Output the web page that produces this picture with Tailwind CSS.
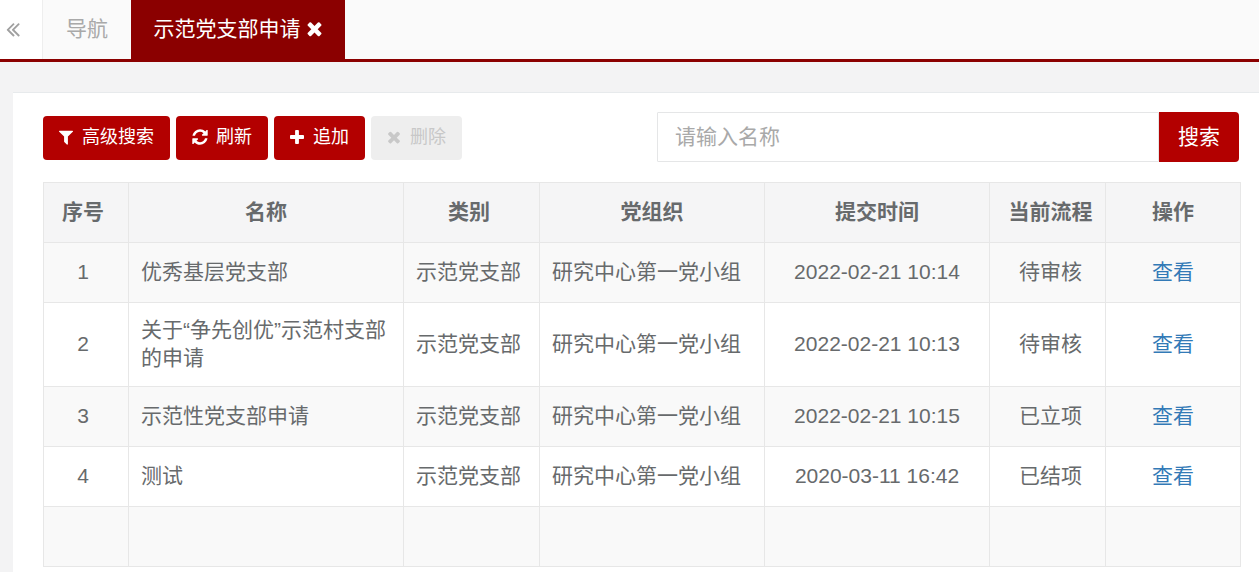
<!DOCTYPE html>
<html lang="en">
  <head>
    <meta charset="UTF-8" />
    <title>示范党支部申请</title>
    <script src="https://cdn.jsdelivr.net/npm/@tailwindcss/browser@4"></script>
  </head>
  <body class="bg-[#f3f3f4] h-[572px] overflow-hidden font-['Liberation_Sans','Noto_Sans_CJK_SC',sans-serif] text-[21px] text-[#676a6c]">
    <!-- Tabs -->
    <nav class="flex h-[62px] bg-[#fafafa] border-b-[3px] border-[#8b0000]">
      <button class="w-[43px] bg-white border-r border-[#eeeeee] flex items-center pl-[6px] pb-[2px]">
        <svg class="w-[14px] h-[24px] fill-[#a0a0a0]" viewBox="0 0 1024 1792"><path d="M627 1376q0 13-10 23l-50 50q-10 10-23 10t-23-10l-466-466q-10-10-10-23t10-23l466-466q10-10 23-10t23 10l50 50q10 10 10 23t-10 23l-393 393 393 393q10 10 10 23zm384 0q0 13-10 23l-50 50q-10 10-23 10t-23-10l-466-466q-10-10-10-23t10-23l466-466q10-10 23-10t23 10l50 50q10 10 10 23t-10 23l-393 393 393 393q10 10 10 23z"></path></svg>
      </button>
      <a class="w-[88px] pb-[2px] flex items-center justify-center text-[#a9a9a9]">导航</a>
      <a class="w-[214px] pb-[2px] bg-[#8b0000] text-white flex items-center justify-center gap-[5px]">
        示范党支部申请
        <svg class="w-[17px] h-[21px] fill-white" viewBox="0 0 1408 1792"><path d="M1298 1322q0 40-28 68l-136 136q-28 28-68 28t-68-28l-294-294-294 294q-28 28-68 28t-68-28l-136-136q-28-28-28-68t28-68l294-294-294-294q-28-28-28-68t28-68l136-136q28-28 68-28t68 28l294 294 294-294q28-28 68-28t68 28l136 136q28 28 28 68t-28 68l-294 294 294 294q28 28 28 68z"></path></svg>
      </a>
    </nav>

    <!-- Main panel -->
    <main class="ml-[13px] mt-[30px] bg-white border-t border-[#e7eaec] pl-[30px] pr-[19px] pt-[19px] h-[480px]">
      <div class="flex justify-between items-start h-[70px]">
        <div class="flex gap-[6px] pt-[4px] text-[18px]">
          <button class="w-[127px] h-[44px] pb-[2px] rounded-[4px] bg-[#b30000] text-white flex items-center justify-center gap-[9px]">
            <svg class="w-[14px] h-[18px] fill-white" viewBox="0 0 1408 1792"><path d="M1403 295q17 41-14 70l-493 493v742q0 42-39 59-13 5-25 5-27 0-45-19l-256-256q-19-19-19-45v-486l-493-493q-31-29-14-70 17-39 59-39h1280q42 0 59 39z"></path></svg>
            高级搜索
          </button>
          <button class="w-[92px] h-[44px] pb-[2px] rounded-[4px] bg-[#b30000] text-white flex items-center justify-center gap-[8px]">
            <svg class="w-[16px] h-[18px] fill-white" viewBox="0 0 1536 1792"><path d="M1511 1056q0 5-1 7-64 268-268 434.5t-478 166.5q-146 0-282.5-55t-243.5-157l-129 129q-19 19-45 19t-45-19-19-45v-448q0-26 19-45t45-19h448q26 0 45 19t19 45-19 45l-137 137q71 66 161 102t187 36q134 0 250-65t186-179q11-17 53-117 8-23 30-23h192q13 0 22.5 9.5t9.5 22.5zm25-800v448q0 26-19 45t-45 19h-448q-26 0-45-19t-19-45 19-45l138-138q-148-137-349-137-134 0-250 65t-186 179q-11 17-53 117-8 23-30 23h-199q-13 0-22.5-9.5t-9.5-22.5v-7q65-268 270-434.5t480-166.5q146 0 284 55.5t245 156.5l130-129q19-19 45-19t45 19 19 45z"></path></svg>
            刷新
          </button>
          <button class="w-[91px] h-[44px] pb-[2px] rounded-[4px] bg-[#b30000] text-white flex items-center justify-center gap-[9px]">
            <svg class="w-[14px] h-[18px] fill-white" viewBox="0 0 1408 1792"><path d="M1408 800v192q0 40-28 68t-68 28h-416v416q0 40-28 68t-68 28h-192q-40 0-68-28t-28-68v-416h-416q-40 0-68-28t-28-68v-192q0-40 28-68t68-28h416v-416q0-40 28-68t68-28h192q40 0 68 28t28 68v416h416q40 0 68 28t28 68z"></path></svg>
            追加
          </button>
          <button class="w-[91px] h-[44px] pb-[2px] rounded-[4px] bg-[#eeeeee] text-[#c8c8c8] flex items-center justify-center gap-[9px]">
            <svg class="w-[14px] h-[18px] fill-[#c8c8c8]" viewBox="0 0 1408 1792"><path d="M1298 1322q0 40-28 68l-136 136q-28 28-68 28t-68-28l-294-294-294 294q-28 28-68 28t-68-28l-136-136q-28-28-28-68t28-68l294-294-294-294q-28-28-28-68t28-68l136-136q28-28 68-28t68 28l294 294 294-294q28-28 68-28t68 28l136 136q28 28 28 68t-28 68l-294 294 294 294q28 28 28 68z"></path></svg>
            删除
          </button>
        </div>
        <div class="flex w-[582px] h-[50px] mr-[1px]">
          <input class="flex-1 min-w-0 border border-[#e5e6e7] rounded-l-[1px] pl-[17px] pr-[12px] outline-none placeholder:text-[#a9a9a9]" placeholder="请输入名称" />
          <button class="w-[80px] bg-[#b30000] text-white rounded-r-[4px]">搜索</button>
        </div>
      </div>

      <table class="table-fixed border-collapse w-[1197px] text-center">
        <colgroup>
          <col class="w-[85px]" /><col class="w-[275px]" /><col class="w-[136px]" /><col class="w-[225px]" /><col class="w-[225px]" /><col class="w-[116px]" /><col class="w-[135px]" />
        </colgroup>
        <thead>
          <tr class="h-[60px] bg-[#f5f5f6] font-bold [&>th]:border [&>th]:border-[#e7e7e7] [&>th]:pb-[2px]">
            <th class="pr-[6px]">序号</th><th>名称</th><th class="pr-[5px]">类别</th><th>党组织</th><th>提交时间</th><th class="pl-[6px]">当前流程</th><th>操作</th>
          </tr>
        </thead>
        <tbody class="leading-[28px] [&_td]:border [&_td]:border-[#e7e7e7] [&_td]:px-[12px] [&_td]:pb-[2px] [&_td:nth-child(1)]:pr-[18px] [&_td:nth-child(2)]:text-left [&_td:nth-child(3)]:text-left [&_td:nth-child(4)]:text-left [&_td:nth-child(6)]:pl-[18px]">
          <tr class="h-[60px] bg-[#f9f9f9]">
            <td>1</td><td>优秀基层党支部</td><td>示范党支部</td><td>研究中心第一党小组</td><td>2022-02-21 10:14</td><td>待审核</td><td><a class="text-[#337ab7]" href="#">查看</a></td>
          </tr>
          <tr class="h-[84px] bg-white">
            <td>2</td><td>关于“争先创优”示范村支部的申请</td><td>示范党支部</td><td>研究中心第一党小组</td><td>2022-02-21 10:13</td><td>待审核</td><td><a class="text-[#337ab7]" href="#">查看</a></td>
          </tr>
          <tr class="h-[60px] bg-[#f9f9f9]">
            <td>3</td><td>示范性党支部申请</td><td>示范党支部</td><td>研究中心第一党小组</td><td>2022-02-21 10:15</td><td>已立项</td><td><a class="text-[#337ab7]" href="#">查看</a></td>
          </tr>
          <tr class="h-[60px] bg-white">
            <td>4</td><td>测试</td><td>示范党支部</td><td>研究中心第一党小组</td><td>2020-03-11 16:42</td><td>已结项</td><td><a class="text-[#337ab7]" href="#">查看</a></td>
          </tr>
          <tr class="h-[60px] bg-[#f9f9f9]">
            <td></td><td></td><td></td><td></td><td></td><td></td><td></td>
          </tr>
        </tbody>
      </table>
    </main>
  </body>
</html>
